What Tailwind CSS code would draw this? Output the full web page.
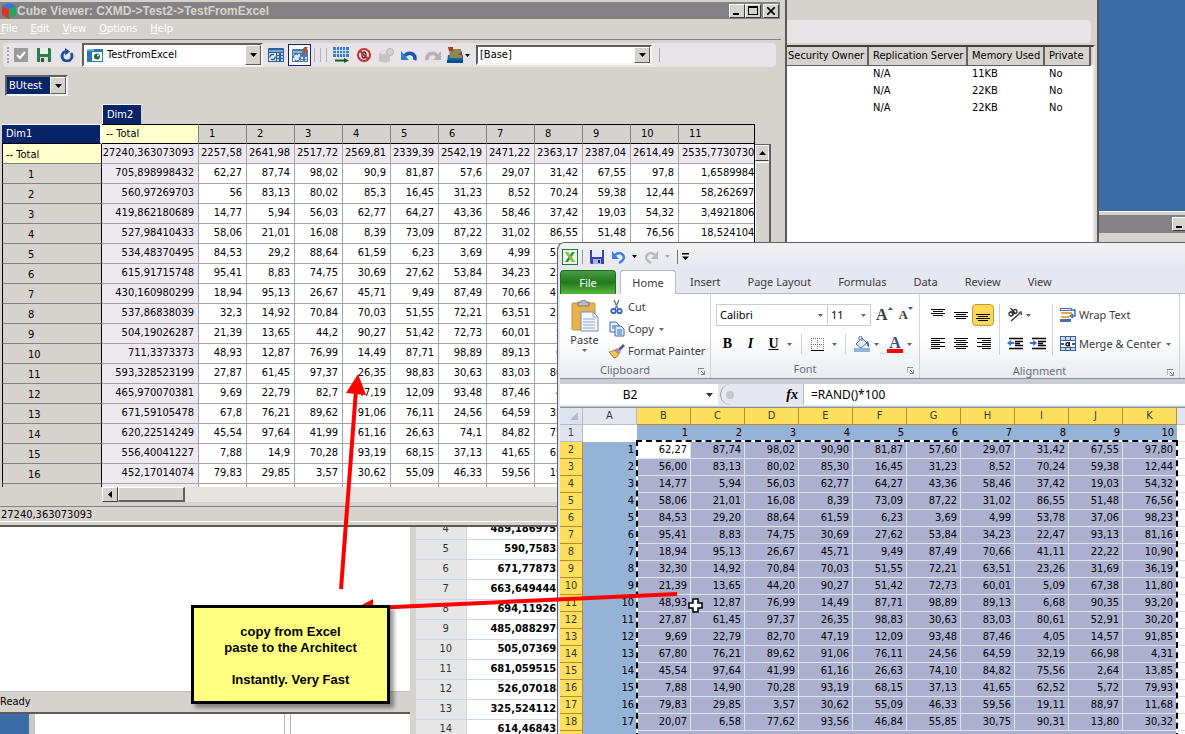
<!DOCTYPE html>
<html lang="en">
<head>
    <meta charset="UTF-8">
    <meta name="viewport" content="width=device-width, initial-scale=1.0">
    <title>Cube Viewer: CXMD-&gt;Test2-&gt;TestFromExcel</title>
    <script src="https://cdn.jsdelivr.net/npm/@tailwindcss/browser@4"></script>
</head>
<body class="bg-[#3b6ca6] font-['DejaVu_Sans_Condensed','Liberation_Sans',sans-serif] text-[11px] leading-4 text-black">
<div class="relative h-screen overflow-hidden whitespace-nowrap">

    <!-- server explorer window -->
    <section class="absolute left-0 right-[86px] top-0 h-[243px] bg-[#d6d3ce] border-r-2 border-b border-[#5a5a5a] flex flex-col items-end pr-[2px]">
        <div class="h-5"></div>
        <div class="h-[23px] w-full bg-[#e7e3e7] rounded-r mr-1"></div>
        <div class="mt-[2px] flex-1 bg-white border-t-2 border-t-[#404040] border-r-2 border-r-[#e8e6e2]">
            <table class="table-fixed w-[307px] border-collapse">
                <thead class="bg-[#d6d3ce]">
                    <tr class="h-[18px]">
                        <th class="w-[82px] p-0 pl-[2px] font-normal text-left border-r-2 border-b border-[#606060]">Security Owner</th>
                        <th class="w-[99px] p-0 pl-1 font-normal text-left border-r-2 border-b border-[#606060]">Replication Server</th>
                        <th class="w-[77px] p-0 pl-1 font-normal text-left border-r-2 border-b border-[#606060]">Memory Used</th>
                        <th class="w-[46px] p-0 pl-1 font-normal text-left border-r-2 border-b border-[#606060]">Private</th>
                        <th class="p-0"></th>
                    </tr>
                </thead>
                <tbody>
                    <tr class="h-[17px]"><td></td><td class="p-0 pl-[5px]">N/A</td><td class="p-0 pl-[5px]">11KB</td><td class="p-0 pl-[5px]">No</td><td></td></tr>
                    <tr class="h-[17px]"><td></td><td class="p-0 pl-[5px]">N/A</td><td class="p-0 pl-[5px]">22KB</td><td class="p-0 pl-[5px]">No</td><td></td></tr>
                    <tr class="h-[17px]"><td></td><td class="p-0 pl-[5px]">N/A</td><td class="p-0 pl-[5px]">22KB</td><td class="p-0 pl-[5px]">No</td><td></td></tr>
                </tbody>
            </table>
        </div>
    </section>

    <!-- window peeking out on the right -->
    <section class="absolute right-0 top-[211px] w-[86px] h-8 bg-[#d6d3ce] border-t border-[#f4f4f4] pt-[3px]">
        <div class="h-[18px] bg-[#848284] flex justify-end items-center overflow-hidden">
            <button aria-label="Minimize" class="w-[13px] h-[14px] bg-[#d6d3ce] border-t border-l border-white border-b-[#404040] border-b flex items-end pl-[3px] pb-[2px]"><span class="block w-[6px] h-[2px] bg-black"></span></button>
        </div>
    </section>

    <!-- lower left windows -->
    <section class="absolute left-[29px] w-[390px] top-[700px] bottom-0 bg-white border-l-[6px] border-[#c9c9cb] flex">
        <div class="w-[250px] border-r border-[#b5b5b5]"></div>
        <div class="w-[6px] border-r border-[#b5b5b5]"></div>
    </section>
    <section class="absolute left-0 w-[411px] top-[520px] h-[194px] bg-white border-b-2 border-[#5a5a5a] flex flex-col justify-end">
        <div class="h-[21px] bg-[#d6d3ce] border-t border-[#c0bdb8] leading-5">Ready</div>
    </section>

    <!-- server view grid -->
    <section class="absolute left-[410px] w-[170px] top-[519px] bottom-0 bg-white border-l-[6px] border-[#d6d3ce] overflow-hidden">
        <table class="table-fixed w-[160px] border-collapse">
            <tbody id="serverRows"></tbody>
        </table>
    </section>

    <!-- cube viewer -->
    <section class="absolute left-0 right-[398px] top-0 h-[527px] bg-[#d6d3ce] border-r-2 border-b-2 border-[#5a5a5a] flex flex-col">
        <header class="mt-[2px] mr-[5px] h-[17px] bg-[#848284] flex items-center">
            <svg class="w-4 h-4 ml-px" viewBox="0 0 16 16"><path d="M8 0L15 3v9L8 16 1 12V3z" fill="#3a8"/><path d="M1 3l7 3v10l-7-4z" fill="#d33"/><path d="M15 3L8 6v10l7-4z" fill="#2aa35a"/><path d="M8 0l7 3-7 3-7-3z" fill="#3d6fd0"/></svg>
            <h1 class="flex-1 font-bold text-[12px] text-[#d6d3ce] font-['Liberation_Sans',sans-serif]">Cube Viewer: CXMD-&gt;Test2-&gt;TestFromExcel</h1>
            <button aria-label="Minimize" class="w-4 h-[14px] bg-[#d6d3ce] border border-white border-r-[#404040] border-b-[#404040] flex items-end pl-[3px] pb-[2px]"><span class="block w-[6px] h-[2px] bg-black"></span></button>
            <button aria-label="Maximize" class="w-4 h-[14px] bg-[#d6d3ce] border border-white border-r-[#404040] border-b-[#404040] grid place-items-center"><span class="block w-[10px] h-[9px] border border-t-2 border-black"></span></button>
            <button aria-label="Close" class="ml-[2px] mr-px w-4 h-[14px] bg-[#d6d3ce] border border-white border-r-[#404040] border-b-[#404040] grid place-items-center"><svg class="w-2 h-2" viewBox="0 0 8 8"><path d="M0 0l8 8M8 0L0 8" stroke="#000" stroke-width="1.7"/></svg></button>
        </header>
        <nav class="mr-[4px] h-[21px] flex items-center gap-[13px] pl-px text-white border-b border-[#848284]">
            <a href="#"><u>F</u>ile</a>
            <a href="#"><u>E</u>dit</a>
            <a href="#"><u>V</u>iew</a>
            <a href="#"><u>O</u>ptions</a>
            <a href="#"><u>H</u>elp</a>
        </nav>

        <div class="mt-[3px] ml-[3px] mr-[9px] h-6 bg-[#e7e3e7] rounded flex items-center">
            <span class="w-[2px] h-4 ml-1 mr-[5px] border-l-2 border-dotted border-[#a8a5a5]"></span>
            <button aria-label="Apply"><svg class="w-[14px] h-[14px]" viewBox="0 0 14 14"><rect width="14" height="14" fill="#9a9a98"/><path d="M3 7l3 3 5-6" stroke="#fff" stroke-width="2" fill="none"/></svg></button>
            <button aria-label="Save" class="ml-[9px]"><svg class="w-[14px] h-[14px]" viewBox="0 0 14 14"><path d="M0 0h13l1 1v13H0z" fill="#2e7d4f"/><rect x="3" width="8" height="6" fill="#e8eee8"/><rect x="3" y="9" width="8" height="5" fill="#d8e0d8"/><rect x="4" y="10" width="3" height="4" fill="#205c38"/></svg></button>
            <button aria-label="Refresh" class="ml-[9px]"><svg class="w-[14px] h-[14px]" viewBox="0 0 14 14"><path d="M11 5A5 5 0 1 1 5 3.500" stroke="#1c4f9c" stroke-width="2.800" fill="none"/><path d="M5 0l5 3.500-5 4z" fill="#1c4f9c"/></svg></button>
            <div class="relative ml-[8px] w-[181px] h-6 bg-white border-2 border-[#606060] border-r-[#f4f4f4] border-b-[#f4f4f4] flex items-center">
                <svg class="absolute left-[3px] w-4 h-[13px]" viewBox="0 0 16 13"><rect width="16" height="13" fill="#2b78b8"/><rect width="7" height="2" fill="#7fb4dd"/><rect x="5" y="3" width="10" height="9" fill="#fff"/><circle cx="10" cy="7.500" r="3" fill="#1d6b4a"/><circle cx="11" cy="6.500" r="1" fill="#fff"/></svg>
                <select aria-label="View" class="appearance-none w-full h-full pl-[23px] outline-none"><option>TestFromExcel</option></select>
                <span class="pointer-events-none absolute right-0 top-0 bottom-0 w-4 bg-[#d6d3ce] border border-white border-r-[#606060] border-b-[#606060] grid place-items-center"><svg class="w-[7px] h-1" viewBox="0 0 7 4"><path d="M0 0h7L3.500 4z"/></svg></span>
            </div>
            <button aria-label="Recalculate" class="ml-[5px]"><svg class="w-4 h-[14px]" viewBox="0 0 16 14"><path d="M0 1q0-1 1-1h14q1 0 1 1v13H0z" fill="#2d5f9a"/><path d="M1 3h14" stroke="#bcd3ea" stroke-width="1.200"/><path d="M9 5h2v2H9zM13 5h2v2h-2zM9 8h2v2H9zM13 8h2v2h-2zM9 11h2v2H9zM13 11h2v2h-2z" fill="#bcd3ea"/><rect x="1" y="5" width="7" height="8" fill="#dce9f6"/><path d="M2 9.500a2.500 2.500 0 0 1 4-2.500M7 8.500a2.500 2.500 0 0 1-4 2.500" stroke="#1c4f9c" fill="none" stroke-width="1.300"/></svg></button>
            <button aria-label="Automatic recalculation" class="ml-1 w-[23px] h-[22px] bg-white border border-[#0a246a] grid place-items-center"><svg class="w-4 h-4" viewBox="0 0 16 16"><path d="M0 3q0-1 1-1h14q1 0 1 1v12H0z" fill="#4a7db4"/><path d="M1 5h9" stroke="#bcd3ea" stroke-width="1.200"/><path d="M9 10h2v2H9zM13 10h2v2h-2zM9 13h2v1H9zM13 13h2v1h-2z" fill="#dce9f6"/><rect x="1" y="7" width="7" height="7" fill="#dce9f6"/><path d="M2 11a2.500 2.500 0 0 1 4-3M7 10a2.500 2.500 0 0 1-4 3" stroke="#1c4f9c" fill="none"/><path d="M12 0h4l-2 3h2l-6 6 2-5h-2z" fill="#b5502f"/></svg></button>
            <span class="ml-[3px] w-px h-[14px] bg-[#b5b2b5]"></span>
            <span class="ml-[5px] w-px h-[14px] bg-[#b5b2b5]"></span>
            <span class="ml-[5px] w-px h-[14px] bg-[#b5b2b5]"></span>
            <button aria-label="Export rows" class="ml-[6px]"><svg class="w-4 h-4" viewBox="0 0 16 16"><rect width="16" height="10" fill="#3c7ec4"/><path d="M0 3.500h16M0 6.500h16M3.500 0v10M6.500 0v10M9.500 0v10M12.500 0v10" stroke="#e6f0fa" stroke-width=".8"/><path d="M2 13.500h10" stroke="#155a2c" stroke-width="2"/><path d="M11 11l5 2.500-5 2.500z" fill="#155a2c"/></svg></button>
            <button aria-label="Suppress zeros" class="ml-2"><svg class="w-[14px] h-[14px]" viewBox="0 0 14 14"><circle cx="7" cy="7" r="6" fill="#f3dada" stroke="#c22f2f" stroke-width="2"/><ellipse cx="7" cy="7" rx="2" ry="3" fill="none" stroke="#333" stroke-width="1.300"/><path d="M3 3l8 8" stroke="#c22f2f" stroke-width="2"/></svg></button>
            <button aria-label="Data spread" class="ml-2"><svg class="w-[15px] h-[15px]" viewBox="0 0 15 15"><path d="M0 4h11v9q-5 3-11 0z" fill="#c6c4c4"/><ellipse cx="5" cy="4" rx="5" ry="2" fill="#e0dede"/><circle cx="11" cy="4" r="3.500" fill="#d2d0d0" stroke="#b6b4b4"/></svg></button>
            <button aria-label="Undo" class="ml-[7px]"><svg class="w-4 h-3" viewBox="0 0 16 12"><path d="M4 7a5 4.500 0 0 1 9.500 4" stroke="#1c57a8" stroke-width="3.600" fill="none"/><path d="M0 2v9h8z" fill="#2c7fc0"/></svg></button>
            <button aria-label="Redo" class="ml-2"><svg class="w-4 h-3" viewBox="0 0 16 12"><path d="M12 7a5 4.500 0 0 0-9.500 4" stroke="#b4b2b4" stroke-width="3.600" fill="none"/><path d="M16 2v9H8z" fill="#b4b2b4"/></svg></button>
            <button aria-label="Charts" class="ml-[6px] flex items-center gap-[2px]"><svg class="w-4 h-4" viewBox="0 0 16 16"><path d="M1 8h15v8H0z" fill="#1766a8"/><path d="M2 2h12l1 9H3z" fill="#8f8850"/><path d="M1 0h5v4H2z" fill="#a33a26"/><path d="M11 8l4-4v4z" fill="#b03322"/><path d="M0 13h16v3H0z" fill="#0f4d90"/></svg><svg class="w-[5px] h-[3px]" viewBox="0 0 5 3"><path d="M0 0h5L2.500 3z"/></svg></button>
            <div class="relative ml-[6px] w-[176px] h-5 bg-white border-2 border-[#606060] border-r-[#f4f4f4] border-b-[#f4f4f4]">
                <select aria-label="Sandbox" class="block appearance-none w-full h-full pl-[2px] outline-none"><option>[Base]</option></select>
                <span class="pointer-events-none absolute right-0 top-0 bottom-0 w-4 bg-[#d6d3ce] border border-white border-r-[#606060] border-b-[#606060] grid place-items-center"><svg class="w-[7px] h-1" viewBox="0 0 7 4"><path d="M0 0h7L3.500 4z"/></svg></span>
            </div>
            <span class="ml-[7px] w-px h-[14px] bg-[#a5a2a5]"></span>
        </div>

        <div class="relative mt-2 ml-[5px] w-[63px] h-[21px] bg-[#0a246a] border-2 border-[#606060] border-r-[#f4f4f4] border-b-[#f4f4f4] text-white">
            <select aria-label="BUtest" class="block appearance-none w-full h-full pl-[2px] outline-none"><option>BUtest</option></select>
            <span class="pointer-events-none absolute right-0 top-0 bottom-0 w-4 bg-[#d6d3ce] border border-white border-r-[#606060] border-b-[#606060] grid place-items-center"><svg class="w-[7px] h-1" viewBox="0 0 7 4"><path d="M0 0h7L3.500 4z"/></svg></span>
        </div>
        <button class="mt-2 ml-[102px] w-[39px] h-5 bg-[#0a246a] text-white text-left pl-1 border-t border-l border-white">Dim2</button>

        <div class="ml-[2px] mr-[14px] flex flex-1 min-h-0">
            <div class="flex flex-col flex-1 min-w-0">
                <div class="h-[363px] overflow-hidden border-r border-black">
                    <table class="table-fixed w-[770px] border-separate border-spacing-0">
                        <thead><tr id="cubeHead" class="h-5"></tr></thead>
                        <tbody id="cubeRows"></tbody>
                    </table>
                </div>
                <div class="ml-[100px] h-[15px] flex bg-[#e6e4e0]">
                    <button aria-label="Scroll left" class="w-4 bg-[#d6d3ce] border border-white border-r-[#404040] border-b-[#404040] grid place-items-center"><svg class="w-1 h-[7px]" viewBox="0 0 4 7"><path d="M4 0v7L0 3.500z"/></svg></button>
                    <span class="w-[67px] bg-[#d6d3ce] border-t border-l border-white border-r-2 border-b-2 border-r-[#606060] border-b-[#606060]"></span>
                </div>
            </div>
            <div class="mt-5 w-4 bg-[#e6e4e0] border-t border-r-2 border-[#606060]">
                <button aria-label="Scroll up" class="block w-[14px] h-4 bg-[#d6d3ce] border border-white border-b-[#404040]"><svg class="mx-auto w-[7px] h-1" viewBox="0 0 7 4"><path d="M0 4h7L3.500 0z"/></svg></button>
                <div class="h-40 mt-px bg-[#d6d3ce] border-l border-t border-white"></div>
            </div>
        </div>
        <footer class="mt-[3px] mb-[3px] mr-1 h-4 border-t border-[#848284] border-b border-b-white pl-px leading-[15px]">27240,363073093</footer>
    </section>

    <!-- spreadsheet -->
    <section class="absolute left-[557px] right-0 top-[242px] bottom-0 bg-[#e6e7ef] rounded-tl-lg border-t border-l border-[#5c5f66] pl-[2px] flex flex-col overflow-hidden text-[#3b3b3b] font-['Noto_Sans','Liberation_Sans',sans-serif]">
        <div class="h-[27px] shrink-0 bg-linear-to-b from-[#f2f2f4] to-[#e6e7ef] flex items-center pl-[2px]">
            <svg class="w-4 h-4" viewBox="0 0 16 16"><rect x=".5" y=".5" width="15" height="15" fill="#eef6ea" stroke="#1f7a3a"/><path d="M3 3h3l2 3 2-3h3l-3.500 5L13 13h-3l-2-3-2 3H3l3.500-5z" fill="#2c9440"/><path d="M3 3h3l7 10h-3z" fill="#8fc63d"/></svg>
            <span class="ml-1 w-px h-[14px] bg-[#9a9ca3]"></span>
            <button aria-label="Save" class="ml-[7px]"><svg class="w-[14px] h-[14px]" viewBox="0 0 14 14"><path d="M0 0h14v14H1L0 13z" fill="#3a45b0"/><rect x="2" width="10" height="7" fill="#e6ecfa"/><rect x="3" y="9" width="8" height="5" fill="#aab4e2"/><rect x="8" y="10" width="2" height="3" fill="#1c2360"/></svg></button>
            <button aria-label="Undo" class="ml-2 flex items-center gap-[7px]"><svg class="w-[13px] h-[14px]" viewBox="0 0 13 14"><path d="M3 5q5-4 8 0t-4 8" stroke="#3f7de0" stroke-width="2.500" fill="none"/><path d="M0 1v8h7z" fill="#3f7de0"/></svg><svg class="w-[5px] h-[3px]" viewBox="0 0 5 3"><path d="M0 0h5L2.500 3z"/></svg></button>
            <button aria-label="Redo" class="ml-2 flex items-center gap-[7px]"><svg class="w-[13px] h-[14px]" viewBox="0 0 13 14"><path d="M10 5q-5-4-8 0t4 8" stroke="#b9bbc1" stroke-width="2.500" fill="none"/><path d="M13 1v8H6z" fill="#b9bbc1"/></svg><svg class="w-[5px] h-[3px]" viewBox="0 0 5 3"><path d="M0 0h5L2.500 3z" fill="#aaa"/></svg></button>
            <span class="ml-[7px] w-px h-[14px] bg-[#777]"></span>
            <button aria-label="Customize" class="ml-1"><svg class="w-[7px] h-[7px]" viewBox="0 0 7 7"><path d="M0 0h7v1.500H0zM0 3.500h7L3.500 7z"/></svg></button>
        </div>
        <nav class="h-6 shrink-0 flex items-stretch leading-6">
            <a href="#" class="w-14 text-center text-white rounded-t bg-linear-to-b from-[#4a9c3e] via-[#1f7a1f] to-[#5cb83c] border border-b-0 border-[#1f6b1f]">File</a>
            <a href="#" class="ml-1 w-14 text-center rounded-t bg-white border border-b-0 border-[#b8bcc6]">Home</a>
            <div class="flex flex-1 gap-[27px] pl-[14px] border-b border-[#b8bcc6]">
                <a href="#">Insert</a>
                <a href="#">Page Layout</a>
                <a href="#">Formulas</a>
                <a href="#">Data</a>
                <a href="#">Review</a>
                <a href="#">View</a>
            </div>
        </nav>

        <div class="h-[85px] shrink-0 overflow-hidden bg-linear-to-b from-white via-white to-[#e9ebf1] border-b border-[#8b9097] flex">
            <div class="w-[151px] shrink-0 border-r border-[#d0d3da] flex flex-col">
                <div class="flex flex-1 pt-[2px]">
                    <button class="w-[49px] flex flex-col items-center">
                        <svg class="w-7 h-8 mt-1 shrink-0" viewBox="0 0 28 32"><rect x="1" y="3" width="23" height="27" rx="1" fill="#e9b14b" stroke="#c48f35"/><path d="M7 2h3q0-2 2.500-2T15 2h3v4H7z" fill="#b8bcc2" stroke="#666" stroke-width=".8"/><path d="M10 12h12l5 5v14H10z" fill="#f4f8fd" stroke="#6f8db0"/><path d="M22 12v5h5M12 19h12M12 22h12M12 25h12M12 28h12" stroke="#8ba6c8" fill="none"/></svg>
                        Paste
                        <svg class="w-[5px] h-[3px] mt-px" viewBox="0 0 5 3"><path d="M0 0h5L2.500 3z" fill="#666"/></svg>
                    </button>
                    <div class="flex flex-col">
                        <button class="h-[22px] flex items-center gap-[3px]"><svg class="w-4 h-4" viewBox="0 0 16 16"><path d="M5 1l4 9M10 1L6 10" stroke="#6b7f99" stroke-width="1.500"/><circle cx="4.500" cy="12" r="2.200" fill="none" stroke="#2f63b5" stroke-width="1.800"/><circle cx="10.500" cy="12" r="2.200" fill="none" stroke="#2f63b5" stroke-width="1.800"/></svg>Cut</button>
                        <button class="h-[22px] flex items-center gap-[3px]"><svg class="w-4 h-4" viewBox="0 0 16 16"><path d="M1 1h6l3 3v7H1z" fill="#e8f0fb" stroke="#3e6cb0"/><path d="M6 5h6l3 3v7H6z" fill="#dbe8fa" stroke="#3e6cb0"/><path d="M3 5h3M3 7h2M8 9h5M8 11h5M8 13h5" stroke="#3e6cb0"/></svg>Copy<svg class="w-[5px] h-[3px] ml-[2px]" viewBox="0 0 5 3"><path d="M0 0h5L2.500 3z" fill="#666"/></svg></button>
                        <button class="h-[22px] flex items-center gap-[3px]"><svg class="w-4 h-4" viewBox="0 0 16 16"><path d="M14 1l2 2-5 5-2-2z" fill="#5b5b70"/><path d="M8 5l4 4-2 2-5-4z" fill="#9a8fc0"/><path d="M5 7l5 4q-2 4-5 4L0 9q3 0 5-2z" fill="#eec75a" stroke="#b08b2c"/></svg>Format Painter</button>
                    </div>
                </div>
                <div class="relative h-[17px] text-center text-[#6a6e78] pr-5">Clipboard<svg class="absolute right-[5px] top-[6px] w-[7px] h-[7px]" viewBox="0 0 7 7"><path d="M0 6V.5h6M3 3l3.500 3.500M6.500 3v3.500H3" stroke="#888" fill="none"/></svg></div>
            </div>

            <div class="w-[209px] shrink-0 border-r border-[#d0d3da] flex flex-col">
                <div class="flex items-center h-[22px] mt-[10px] pl-[5px]">
                    <div class="relative"><select aria-label="Font" class="block appearance-none w-28 h-[22px] pl-[3px] bg-white border border-[#c8ccd4] text-black"><option>Calibri</option></select><svg class="pointer-events-none absolute right-[5px] top-[10px] w-[5px] h-[3px]" viewBox="0 0 5 3"><path d="M0 0h5L2.500 3z" fill="#666"/></svg></div>
                    <div class="relative"><select aria-label="Font size" class="block appearance-none w-[43px] h-[22px] pl-[3px] bg-white border border-l-0 border-[#c8ccd4] text-black"><option>11</option></select><svg class="pointer-events-none absolute right-[5px] top-[10px] w-[5px] h-[3px]" viewBox="0 0 5 3"><path d="M0 0h5L2.500 3z" fill="#666"/></svg></div>
                    <button aria-label="Grow font" class="ml-[5px] flex items-start font-['Liberation_Serif',serif] font-bold text-[16px]">A<svg class="w-[5px] h-[3px]" viewBox="0 0 5 3"><path d="M0 3h5L2.500 0z" fill="#2f5fb5"/></svg></button>
                    <button aria-label="Shrink font" class="ml-[6px] flex items-start font-['Liberation_Serif',serif] font-bold text-[13px]">A<svg class="w-[5px] h-[3px]" viewBox="0 0 5 3"><path d="M0 0h5L2.500 3z" fill="#2f5fb5"/></svg></button>
                </div>
                <div class="flex items-center h-[22px] mt-[7px] pl-[11px] font-['Liberation_Serif',serif] text-[14px] text-black">
                    <button aria-label="Bold" class="w-[11px] font-bold">B</button>
                    <button aria-label="Italic" class="w-[23px] italic font-bold ml-[6px]">I</button>
                    <button aria-label="Underline" class="w-[11px] font-bold underline ml-[6px]">U</button>
                    <svg class="w-[5px] h-[3px] ml-2" viewBox="0 0 5 3"><path d="M0 0h5L2.500 3z" fill="#666"/></svg>
                    <span class="ml-[9px] w-px h-5 bg-[#d0d3da]"></span>
                    <button aria-label="Borders" class="ml-[9px]"><svg class="w-[13px] h-[13px]" viewBox="0 0 13 13"><path d="M.5 0v12M6.500 0v12M12.500 0v12M0 .5h13M0 6.500h13" stroke="#777" stroke-dasharray="1 1"/><path d="M0 12.500h13" stroke="#000"/></svg></button>
                    <svg class="w-[5px] h-[3px] ml-2" viewBox="0 0 5 3"><path d="M0 0h5L2.500 3z" fill="#666"/></svg>
                    <span class="ml-2 w-px h-5 bg-[#d0d3da]"></span>
                    <button aria-label="Fill color" class="ml-2"><svg class="w-4 h-4" viewBox="0 0 16 16"><rect y="12" width="16" height="4" fill="#95b3d7"/><path d="M2 8l6-6 5 5-6 5z" fill="#dfe9f7" stroke="#556f96"/><path d="M8 5V1q-2-2-3 0v3" fill="none" stroke="#556f96"/><path d="M13 5q3 2 2 6-3-1-2-6z" fill="#2f63b5"/></svg></button>
                    <svg class="w-[5px] h-[3px] ml-1" viewBox="0 0 5 3"><path d="M0 0h5L2.500 3z" fill="#666"/></svg>
                    <button aria-label="Font color" class="ml-2 w-4 h-[17px] border-b-4 border-[#ff0000] leading-[14px] text-[16px] font-bold text-[#33518a]">A</button>
                    <svg class="w-[5px] h-[3px] ml-1" viewBox="0 0 5 3"><path d="M0 0h5L2.500 3z" fill="#666"/></svg>
                </div>
                <div class="relative mt-auto h-[17px] text-center text-[#6a6e78] pr-5">Font<svg class="absolute right-[5px] top-[6px] w-[7px] h-[7px]" viewBox="0 0 7 7"><path d="M0 6V.5h6M3 3l3.500 3.500M6.500 3v3.500H3" stroke="#888" fill="none"/></svg></div>
            </div>

            <div class="w-[260px] shrink-0 border-r border-[#d0d3da] flex flex-col">
                <div class="flex flex-1 pt-[10px]">
                    <div class="flex flex-col gap-[7px] pl-[6px] w-[80px] border-r border-[#d0d3da] mb-2">
                        <div class="flex h-[22px]">
                            <button aria-label="Top align" class="w-[23px] grid place-items-center"><svg class="w-[14px] h-[14px]" viewBox="0 0 14 14"><path d="M0 1.500h14M2 3.500h10M0 5.500h14M2 7.500h10" stroke="#000"/></svg></button>
                            <button aria-label="Middle align" class="w-[23px] grid place-items-center"><svg class="w-[14px] h-[14px]" viewBox="0 0 14 14"><path d="M0 4.500h14M2 6.500h10M0 8.500h14M2 10.500h10" stroke="#000"/></svg></button>
                            <button aria-label="Bottom align" class="w-[22px] grid place-items-center rounded-sm bg-[#fbd75b] border border-[#c29a29]"><svg class="w-[14px] h-[14px]" viewBox="0 0 14 14"><path d="M0 6.500h14M2 8.500h10M0 10.500h14M2 12.500h10" stroke="#000"/></svg></button>
                        </div>
                        <div class="flex h-[22px]">
                            <button aria-label="Align left" class="w-[23px] grid place-items-center"><svg class="w-[14px] h-[12px]" viewBox="0 0 14 12"><path d="M0 .5h14M0 2.500h9M0 4.500h14M0 6.500h9M0 8.500h14M0 10.500h9" stroke="#000"/></svg></button>
                            <button aria-label="Center" class="w-[23px] grid place-items-center"><svg class="w-[14px] h-[12px]" viewBox="0 0 14 12"><path d="M0 .5h14M2 2.500h10M0 4.500h14M2 6.500h10M0 8.500h14M2 10.500h10" stroke="#000"/></svg></button>
                            <button aria-label="Align right" class="w-[23px] grid place-items-center"><svg class="w-[14px] h-[12px]" viewBox="0 0 14 12"><path d="M0 .5h14M5 2.500h9M0 4.500h14M5 6.500h9M0 8.500h14M5 10.500h9" stroke="#000"/></svg></button>
                        </div>
                    </div>
                    <div class="flex flex-col gap-[7px] pl-[7px] w-[53px] border-r border-[#d0d3da] mb-2">
                        <button aria-label="Orientation" class="h-[22px] flex items-center gap-[3px]"><svg class="w-4 h-4" viewBox="0 0 16 16"><g fill="none" stroke="#333" stroke-width="1.300"><circle cx="4" cy="7" r="2"/><path d="M3.500 4l3 4"/><circle cx="8" cy="4.500" r="2"/><path d="M3.500 1L8 6M4 14l9-8"/></g><path d="M15 4v5l-4-4z" fill="#666"/></svg><svg class="w-[5px] h-[3px]" viewBox="0 0 5 3"><path d="M0 0h5L2.500 3z" fill="#666"/></svg></button>
                        <div class="flex h-[22px] items-center gap-[7px]">
                            <button aria-label="Decrease indent"><svg class="w-4 h-[14px]" viewBox="0 0 16 14"><path d="M2 1.500h14M8 4.500h8M8 6.500h5M8 8.500h8M2 11.500h14" stroke="#000" stroke-width="1.300"/><path d="M0 6l4-3v2h3v2H4v2z" fill="#2f6fd8"/></svg></button>
                            <button aria-label="Increase indent"><svg class="w-4 h-[14px]" viewBox="0 0 16 14"><path d="M2 1.500h14M8 4.500h8M8 6.500h5M8 8.500h8M2 11.500h14" stroke="#000" stroke-width="1.300"/><path d="M7 6L3 3v2H0v2h3v2z" fill="#2f6fd8"/></svg></button>
                        </div>
                    </div>
                    <div class="flex flex-col gap-[7px] pl-[7px]">
                        <button class="h-[22px] flex items-center gap-[3px]"><svg class="w-4 h-4" viewBox="0 0 16 16"><path d="M0 2.500h12M0 13.500h11" stroke="#4a6fa5" stroke-width="3"/><path d="M1 2.500h10" stroke="#fff"/><path d="M1 6h11M1 10h8" stroke="#e08a1e" stroke-width="1.500"/><path d="M12 3h3v6h-3M13 7l-3 2 3 2" fill="none" stroke="#2f5fb5" stroke-width="1.300"/></svg>Wrap Text</button>
                        <button class="h-[22px] flex items-center gap-[3px]"><svg class="w-4 h-4" viewBox="0 0 16 16"><rect x=".5" y=".5" width="15" height="14" fill="#c9dbf2" stroke="#3f5f94"/><path d="M0 4.500h16M0 11.500h16M5.500 0v4M10.500 0v4M5.500 11v4M10.500 11v4" stroke="#3f5f94"/><rect x="1" y="5" width="14" height="6" fill="#fff"/><path d="M1 8h3M12 8h3" stroke="#2f5fb5" stroke-width="2"/><circle cx="7.500" cy="8.200" r="1.600" fill="none" stroke="#000" stroke-width="1.200"/><path d="M9.500 6v4.500" stroke="#000" stroke-width="1.200"/></svg>Merge &amp; Center<svg class="w-[5px] h-[3px] ml-[2px]" viewBox="0 0 5 3"><path d="M0 0h5L2.500 3z" fill="#666"/></svg></button>
                    </div>
                </div>
                <div class="relative h-[17px] text-center text-[#6a6e78] pr-5">Alignment<svg class="absolute right-[5px] top-[6px] w-[7px] h-[7px]" viewBox="0 0 7 7"><path d="M0 6V.5h6M3 3l3.500 3.500M6.500 3v3.500H3" stroke="#888" fill="none"/></svg></div>
            </div>
        </div>

        <div class="h-[28px] shrink-0 bg-[#c8ccd4] pt-[5px] pb-px">
            <div class="h-full flex bg-[#e6e7ef] text-[12px] text-black">
                <div class="relative w-[158px]">
                    <input aria-label="Name box" value="B2" class="w-full h-[21px] bg-white pr-[18px] text-center">
                    <svg class="absolute right-[5px] top-[9px] w-[7px] h-1" viewBox="0 0 7 4"><path d="M0 0h7L3.500 4z" fill="#333"/></svg>
                </div>
                <div class="w-[86px] h-[21px] flex items-center justify-between pl-[2px] pr-[5px] border-r border-[#b8bcc6]">
                    <span class="w-[22px] h-[21px] rounded-l-full border-l border-[#9a9ca3] flex items-center pl-[5px]"><span class="w-2 h-2 rounded-full bg-[#c4c7cf]"></span></span>
                    <button aria-label="Insert function" class="font-['Liberation_Serif',serif] italic font-bold text-[14px]">fx</button>
                </div>
                <input aria-label="Formula" value="=RAND()*100" class="flex-1 h-[21px] min-w-0 bg-white pl-[7px]">
            </div>
        </div>

        <div class="relative flex-1 bg-white border-t border-[#8b9097] font-['DejaVu_Sans_Condensed','Liberation_Sans',sans-serif] overflow-hidden">
            <table class="table-fixed w-[671px] border-separate border-spacing-0">
                <thead><tr id="sheetHead" class="h-[17px]"></tr></thead>
                <tbody id="sheetRows"></tbody>
            </table>
            <!-- copied range outline -->
            <div class="pointer-events-none absolute left-[76px] top-[32px] w-[542px] h-[400px] border-2 border-white"></div>
            <div class="pointer-events-none absolute left-[76px] top-[32px] w-[542px] h-[400px] border-2 border-dashed border-black"></div>
        </div>
    </section>

    <!-- annotations -->
    <svg class="pointer-events-none absolute left-0 top-0 w-[720px] h-[734px]" viewBox="0 0 720 734">
        <path d="M341 589L356 390" stroke="#f00" stroke-width="4"/>
        <path d="M358 374l8 21-20-2z" fill="#f00"/>
        <path d="M677 594L372 608" stroke="#f00" stroke-width="4"/>
        <path d="M358 607l15-8v17z" fill="#f00"/>
        <path d="M693 599h5v4h4v5h-4v4h-5v-4h-4v-5h4z" fill="#fff" stroke="#000" stroke-width="1.500"/>
    </svg>
    <div class="absolute left-[191px] top-[605px] w-[199px] h-[99px] bg-[#ffff80] border-[3px] border-black shadow-[4px_4px_4px_rgba(0,0,0,0.4)] flex flex-col justify-center pt-[2px] text-center font-bold text-[13px] font-['Liberation_Sans',sans-serif]">
        <p>copy from Excel</p>
        <p>paste to the Architect</p>
        <p class="mt-4">Instantly. Very Fast</p>
    </div>
</div>

<script>
    const data = [
        '62,27 87,74 98,02 90,90 81,87 57,60 29,07 31,42 67,55 97,80',
        '56,00 83,13 80,02 85,30 16,45 31,23 8,52 70,24 59,38 12,44',
        '14,77 5,94 56,03 62,77 64,27 43,36 58,46 37,42 19,03 54,32',
        '58,06 21,01 16,08 8,39 73,09 87,22 31,02 86,55 51,48 76,56',
        '84,53 29,20 88,64 61,59 6,23 3,69 4,99 53,78 37,06 98,23',
        '95,41 8,83 74,75 30,69 27,62 53,84 34,23 22,47 93,13 81,16',
        '18,94 95,13 26,67 45,71 9,49 87,49 70,66 41,11 22,22 10,90',
        '32,30 14,92 70,84 70,03 51,55 72,21 63,51 23,26 31,69 36,19',
        '21,39 13,65 44,20 90,27 51,42 72,73 60,01 5,09 67,38 11,80',
        '48,93 12,87 76,99 14,49 87,71 98,89 89,13 6,68 90,35 93,20',
        '27,87 61,45 97,37 26,35 98,83 30,63 83,03 80,61 52,91 30,20',
        '9,69 22,79 82,70 47,19 12,09 93,48 87,46 4,05 14,57 91,85',
        '67,80 76,21 89,62 91,06 76,11 24,56 64,59 32,19 66,98 4,31',
        '45,54 97,64 41,99 61,16 26,63 74,10 84,82 75,56 2,64 13,85',
        '7,88 14,90 70,28 93,19 68,15 37,13 41,65 62,52 5,72 79,93',
        '79,83 29,85 3,57 30,62 55,09 46,33 59,56 19,11 88,97 11,68',
        '20,07 6,58 77,62 93,56 46,84 55,85 30,75 90,31 13,80 30,32'
    ].map(row => row.split(' '));

    const totals = ['705,898998432', '560,97269703', '419,862180689', '527,98410433', '534,48370495', '615,91715748',
        '430,160980299', '537,86838039', '504,19026287', '711,3373373', '593,328523199', '465,970070381',
        '671,59105478', '620,22514249', '556,40041227', '452,17014074'];
    const col11 = ['1,658998432', '58,26269703', '3,492180689', '18,52410433'];
    const grandTotals = ['2257,58', '2641,98', '2517,72', '2569,81', '2339,39', '2542,19', '2471,22', '2363,17', '2387,04', '2614,49', '2535,773073093'];

    // cube viewer grid
    const cubeCell = (v, tint) => `<td class="p-0 pr-1 text-right leading-[18px] align-top border-r border-b border-[#a5a5a5] ${tint ? 'bg-[#ede9ee]' : 'bg-white'}">${v}</td>`;
    const cubeRowHead = (v, total) => `<th class="p-0 pt-[3px] leading-4 font-normal text-left border-l border-l-black border-r border-r-black border-b border-b-[#848284] ${total ? 'bg-[#ffffce] pl-[3px]' : 'bg-[#d6d3ce] pl-[25px]'}">${v}</th>`;

    let head = '<th class="w-[100px] p-0 pl-1 font-normal text-left bg-[#0a246a] text-white border-t border-t-white border-b border-b-black border-r-2 border-r-white">Dim1</th>';
    head += '<th class="w-[97px] p-0 pl-1 font-normal text-left bg-[#ffffce] border-t border-b border-black border-r border-r-[#848284]">-- Total</th>';
    for (let i = 1; i <= 11; i++) {
        head += `<th class="${i === 11 ? 'w-[93px]' : 'w-[48px]'} p-0 pl-[10px] font-normal text-left border-t border-b border-black border-r border-r-[#848284]">${i}</th>`;
    }
    document.getElementById('cubeHead').innerHTML = head;

    let rows = `<tr class="h-5">${cubeRowHead('-- Total', true)}${cubeCell('27240,363073093', true)}${grandTotals.map(v => cubeCell(v, true)).join('')}</tr>`;
    totals.forEach((total, i) => {
        const values = data[i].map(v => v.replace(/,?0+$/, ''));
        rows += `<tr class="h-5">${cubeRowHead(i + 1, false)}${cubeCell(total, true)}${values.map((v, c) => cubeCell(i < 4 || c < 8 ? v : '', false)).join('')}${cubeCell(col11[i] || '', false)}</tr>`;
    });
    rows += `<tr class="h-5">${cubeRowHead('', false)}${cubeCell('', true)}${grandTotals.map(() => cubeCell('', false)).join('')}</tr>`;
    document.getElementById('cubeRows').innerHTML = rows;

    // spreadsheet grid
    let sheetHead = '<th class="w-[23px] p-0 bg-[#dfe3ee] border-b border-r border-[#b8bcc6]"><svg class="ml-auto mr-1 w-2 h-2" viewBox="0 0 8 8"><path d="M8 0v8H0z" fill="#b4bac8"/></svg></th>';
    'ABCDEFGHIJKL'.split('').forEach(c => {
        const picked = c !== 'A' && c !== 'L';
        sheetHead += `<th class="w-[54px] p-0 font-normal border-b border-r ${picked ? 'bg-[#fcdf5c] border-[#c08a2c]' : 'bg-[#e3e5ee] border-[#b8bcc6]'}">${c === 'L' ? '' : c}</th>`;
    });
    document.getElementById('sheetHead').innerHTML = sheetHead;

    let sheet = '<tr class="h-[17px]"><th class="p-0 font-normal bg-[#dfe3ee] border-b border-r border-[#b8bcc6]">1</th><td></td>';
    for (let i = 1; i <= 10; i++) sheet += `<td class="p-0 pr-[3px] text-right bg-[#95b3d7] text-black border-b border-[#95b3d7]">${i}</td>`;
    sheet += '<td class="border-b border-[#d8dbe2]"></td></tr>';
    data.forEach((row, r) => {
        sheet += `<tr class="h-[17px]"><th class="p-0 font-normal bg-[#fcdf5c] border-b border-r border-[#c08a2c]">${r + 2}</th><td class="p-0 pr-[3px] text-right bg-[#95b3d7] text-black border-b border-[#95b3d7]">${r + 1}</td>`;
        row.forEach((v, c) => {
            sheet += `<td class="p-0 pr-[3px] text-right text-black border-b border-r border-[#dfe6e6] ${r + c === 0 ? 'bg-white' : 'bg-[#acb0d0]'}">${v}</td>`;
        });
        sheet += '<td class="border-b border-[#d8dbe2]"></td></tr>';
    });
    sheet += '<tr class="h-[17px]"><th class="bg-[#fcdf5c] border-r border-[#c08a2c]"></th><td class="bg-[#95b3d7]"></td><td colspan="10" class="bg-[#acb0d0]"></td><td></td></tr>';
    document.getElementById('sheetRows').innerHTML = sheet;

    // server view grid
    const serverValues = ['489,18697533', '590,758333', '671,7787322', '663,64944455', '694,1192622', '485,08829766', '505,0736933', '681,05951533', '526,0701888', '325,52411222', '614,4684322'];
    document.getElementById('serverRows').innerHTML = serverValues.map((v, i) =>
        `<tr class="h-5"><th class="w-[50px] p-0 pl-[10px] font-normal text-[#333] bg-[#e6e6e6] border-b border-r border-[#ccd6f0]">${i + 4}</th><td class="p-0 pr-[6px] text-right font-bold border-b border-[#ccd6f0]">${v}</td></tr>`).join('');
</script>
</body>
</html>
